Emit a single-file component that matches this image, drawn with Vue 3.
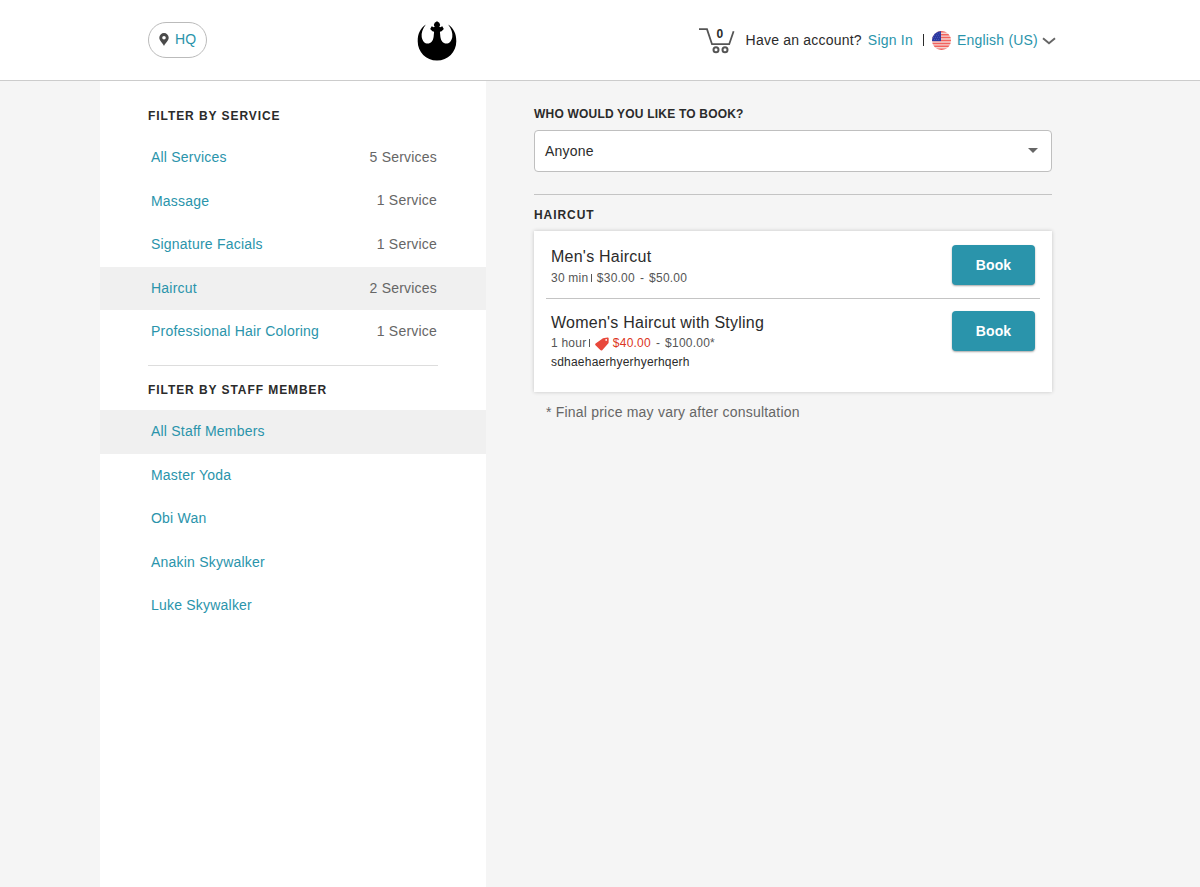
<script setup>
const services = [
  { name: 'All Services', count: '5 Services' },
  { name: 'Massage', count: '1 Service' },
  { name: 'Signature Facials', count: '1 Service' },
  { name: 'Haircut', count: '2 Services', active: true },
  { name: 'Professional Hair Coloring', count: '1 Service' },
]
const staff = [
  { name: 'All Staff Members', active: true },
  { name: 'Master Yoda' },
  { name: 'Obi Wan' },
  { name: 'Anakin Skywalker' },
  { name: 'Luke Skywalker' },
]
</script>

<template>
  <div class="page">
    <header class="topbar">
      <a class="location">
        <svg width="10" height="13" viewBox="0 0 10 13"><path fill="#4a4a4a" fill-rule="evenodd" d="M5 0A4.700 4.700 0 0 0 .3 4.700C.3 7.600 3.500 9.600 5 13 6.500 9.600 9.700 7.600 9.700 4.700A4.700 4.700 0 0 0 5 0ZM5 2.900a1.800 1.800 0 1 1 0 3.600 1.800 1.800 0 0 1 0-3.600Z" /></svg>
        <span>HQ</span>
      </a>
      <svg class="logo" width="40" height="40" viewBox="0 0 40 40">
        <path d="M8.900 3.500C3 7.500.7 13 .7 20.200.7 31 9 39.500 20 39.500S39.300 31 39.300 20.200C39.300 13 37 7.500 31.100 3.500 34.600 8 35.800 12 35.300 16 34.600 20.300 32 22.600 29.400 22.600 26 22.600 24 19.800 23.400 16L22.900 10.800 24.600 10.300 26.800 7.900 25.300 5.200 23.200 6.200 22.300 5.800 23.200 4.100 22.300 1.700 20 .3 17.700 1.700 16.800 4.100 17.700 5.800 16.800 6.200 14.700 5.200 13.200 7.900 15.400 10.300 17.100 10.800 16.600 16C16 19.800 14 22.600 10.600 22.600 8 22.600 5.400 20.300 4.700 16 4.200 12 5.400 8 8.900 3.500Z" />
      </svg>
      <div class="account">
        <div class="cart">
          <svg width="37" height="27" viewBox="0 0 37 27" fill="none" stroke="#555" stroke-width="1.800">
            <path d="M1 2.100H9L14 17.200H31.200L35.600 4.300" />
            <circle cx="18" cy="22.800" r="2.500" stroke-width="2" /><circle cx="27" cy="22.800" r="2.500" stroke-width="2" />
          </svg>
          <b>0</b>
        </div>
        <span class="question">Have an account?</span>
        <a class="signin">Sign In</a>
        <i class="bar"></i>
        <svg class="flag" width="19" height="19" viewBox="0 0 18 18">
          <defs><clipPath id="round"><circle cx="9" cy="9" r="9" /></clipPath></defs>
          <g clip-path="url(#round)">
            <rect width="18" height="18" fill="#f3d5d0" />
            <path stroke="#f3615c" stroke-width="1.400" d="M0 .7H18M0 3.460H18M0 6.230H18M0 9H18M0 11.770H18M0 14.540H18M0 17.300H18" />
            <rect width="8.500" height="9.600" fill="#2937a0" />
            <path stroke="#6b76c4" stroke-width=".7" stroke-dasharray=".7 1.300" d="M1 2H8M2 4H8M1 6H8M2 8H8" />
          </g>
        </svg>
        <a>English (US)</a>
        <svg class="chevron" width="14" height="8" viewBox="0 0 14 8"><path d="M1 1.200 7 6.300 13 1.200" fill="none" stroke="#666" stroke-width="1.900" /></svg>
      </div>
    </header>

    <div class="body">
      <aside class="sidebar">
        <h2>FILTER BY SERVICE</h2>
        <ul class="services">
          <li v-for="s in services" :key="s.name" :class="{ active: s.active }">
            <a>{{ s.name }}</a><span>{{ s.count }}</span>
          </li>
        </ul>
        <hr />
        <h2>FILTER BY STAFF MEMBER</h2>
        <ul class="staff">
          <li v-for="s in staff" :key="s.name" :class="{ active: s.active }"><a>{{ s.name }}</a></li>
        </ul>
      </aside>

      <main class="content">
        <h3 class="who">WHO WOULD YOU LIKE TO BOOK?</h3>
        <div class="select">
          <span>Anyone</span>
          <svg width="10" height="5" viewBox="0 0 10 5"><path d="M0 0H10L5 5Z" fill="#666" /></svg>
        </div>
        <hr />
        <h3 class="category">HAIRCUT</h3>
        <section class="card">
          <article class="item">
            <div>
              <h4>Men's Haircut</h4>
              <p class="meta"><span>30 min</span><i></i><span>$30.00</span><span class="dash">-</span><span>$50.00</span></p>
            </div>
            <button>Book</button>
          </article>
          <article class="item second">
            <div>
              <h4>Women's Haircut with Styling</h4>
              <p class="meta">
                <span>1 hour</span><i></i>
                <svg class="tag" width="14" height="14" viewBox="0 0 14 14"><path fill="#e8483b" fill-rule="evenodd" d="M8 1.200 12.500.4Q13.700.3 13.700 1.400L13.600 6 7.200 13.200Q6.200 14 5.300 13.100L.5 8.300Q-.2 7.400.6 6.600ZM11.200 2a.9.9 0 1 0 0 1.800.9.9 0 0 0 0-1.800Z" /></svg>
                <span class="sale">$40.00</span><span class="dash">-</span><span>$100.00*</span>
              </p>
              <p class="desc">sdhaehaerhyerhyerhqerh</p>
            </div>
            <button>Book</button>
          </article>
        </section>
        <p class="footnote">* Final price may vary after consultation</p>
      </main>
    </div>
  </div>
</template>

<style>
body { margin: 0; background: #f5f5f5; }
</style>

<style scoped>
.page {
  height: 887px;
  display: flex;
  flex-direction: column;
  overflow: hidden;
  background: #f5f5f5;
  color: #2b2b2b;
  font: 14px/16px "Liberation Sans", Arial, sans-serif;
  letter-spacing: 0.21px;
}
h2, h3, h4, p, ul { margin: 0; padding: 0; font-weight: normal; }
ul { list-style: none; }
svg { display: block; flex: none; }
a { color: #2a94ab; white-space: nowrap; }

.topbar {
  box-sizing: border-box;
  height: 81px;
  flex: none;
  display: flex;
  align-items: center;
  padding: 0 144px 0 148px;
  background: #fff;
  border-bottom: 1px solid #ccc;
}
.location {
  box-sizing: border-box;
  width: 59px;
  height: 36px;
  border: 1px solid #bbb;
  border-radius: 18px;
  display: flex;
  align-items: center;
  gap: 6px;
  padding: 0 0 2px 10px;
}
.location svg { margin-top: 1px; }
.logo { margin: 1px 0 0 210px; }
.account { margin-left: auto; display: flex; align-items: center; }
.cart { position: relative; width: 37px; margin-right: 10.5px; }
.cart b { position: absolute; left: 18.5px; top: 0; font-size: 12px; line-height: 14px; }
.question { margin-right: 6px; white-space: nowrap; }
.bar { width: 1px; height: 12px; margin: 0 8.5px 0 10px; background: #2b2b2b; }
.flag { margin-right: 5.5px; }
.chevron { margin: 2px 0 0 4px; }

.body { flex: 1; display: flex; padding-left: 100px; }
.sidebar { width: 386px; background: #fff; }
h2 {
  padding: 28px 0 13.2px 48px;
  font-size: 12px;
  line-height: 14px;
  font-weight: bold;
  letter-spacing: 0.93px;
}
li {
  box-sizing: border-box;
  height: 43.5px;
  display: flex;
  align-items: center;
  justify-content: space-between;
  padding: 0 49px 1.4px 51px;
}
li span { color: #666; padding-bottom: 0.8px; }
.active { background: #f0f0f0; }
.active span { padding-bottom: 0; }
.sidebar hr { margin: 11.3px 48px 0; border: 0; height: 1px; background: #ddd; }
.sidebar hr + h2 { padding-top: 17px; }

.content { width: 518px; padding: 26px 0 0 48px; }
h3 { font-size: 12px; line-height: 14px; font-weight: bold; }
.who { letter-spacing: 0.2px; }
.select {
  box-sizing: border-box;
  height: 42px;
  margin-top: 9px;
  padding: 0 13px 0 10px;
  display: flex;
  align-items: center;
  justify-content: space-between;
  background: #fff;
  border: 1px solid #bfbfbf;
  border-radius: 4px;
}
.select svg { margin-top: -1px; }
.content hr { margin: 22px 0 13px; border: 0; height: 1px; background: #c4c4c4; }
.category { letter-spacing: 0.93px; }
.card {
  box-sizing: border-box;
  height: 161px;
  margin-top: 9px;
  padding: 0 12px;
  background: #fff;
  box-shadow: 0 0 4px rgba(0, 0, 0, 0.2);
}
.item {
  box-sizing: border-box;
  height: 67px;
  display: flex;
  justify-content: space-between;
  align-items: flex-start;
  padding: 14px 5px 0;
}
.item:first-child { border-bottom: 1px solid #c4c4c4; height: 68px; }
.item.second { padding-top: 12px; }
h4 { font-size: 16px; line-height: 18px; padding-top: 3px; letter-spacing: 0.24px; }
.meta { display: flex; align-items: center; margin-top: 5px; font-size: 12px; line-height: 14px; color: #555; letter-spacing: 0.22px; }
.meta i { width: 1px; height: 8px; margin: 0 4.500px 0 3px; background: #555; }
.second .meta { margin-top: 4px; }
.dash { margin: 0 5px; }
.tag { margin: 1px 4px -1px 0; }
.sale { color: #dc3522; }
.desc { margin-top: 5px; font-size: 12px; line-height: 14px; }
button {
  width: 83px;
  height: 40px;
  padding: 0;
  border: 0;
  border-radius: 4px;
  background: #2a94ab;
  box-shadow: 0 1px 2px rgba(0, 0, 0, 0.35);
  color: #fff;
  font: bold 14px "Liberation Sans", Arial, sans-serif;
  letter-spacing: 0.1px;
}
.footnote { margin: 12px 0 0 12px; color: #666; }
</style>
